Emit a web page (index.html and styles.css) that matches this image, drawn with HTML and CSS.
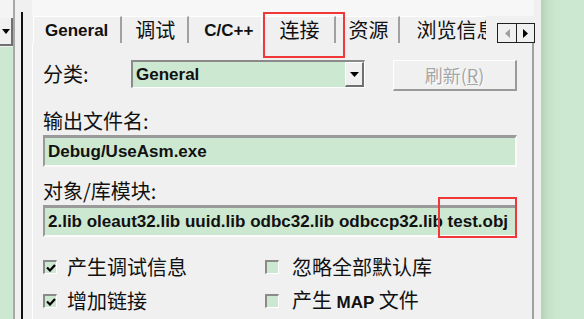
FILE: index.html
```html
<!DOCTYPE html>
<html>
<head>
<meta charset="utf-8">
<link rel="stylesheet" href="styles.css">
</head>
<body>
<div class="screen">
  <div class="left">
    <div class="left-top"></div>
    <div class="dd"><svg width="8" height="5" viewBox="0 0 8 5"><path d="M0 0H8L4 5Z" fill="#000"/></svg></div>
    <div class="left-field"></div>
  </div>
  <div class="gutter"></div>
  <div class="rule"></div>
  <div class="dialog">
    <div class="tabbar">
      <div class="tabs">
        <div class="tab t-general lat">General</div>
        <div class="tab t-debug">调试</div>
        <div class="tab t-cpp lat">C/C++</div>
        <div class="tab t-link">连接</div>
        <div class="tab t-res">资源</div>
        <div class="tab t-browse">浏览信息</div>
      </div>
      <div class="spin">
        <div class="spin-btn"><svg width="5" height="9" viewBox="0 0 5 9"><path d="M5 0V9L0 4.5Z" fill="#a0a0a0"/></svg></div>
        <div class="spin-btn"><svg width="5" height="9" viewBox="0 0 5 9"><path d="M0 0V9L5 4.5Z" fill="#000"/></svg></div>
      </div>
    </div>
    <div class="pane">
      <div class="row1">
        <span class="label cat">分类:</span>
        <div class="combo">
          <span class="val">General</span>
          <div class="combo-btn"><svg width="9" height="5" viewBox="0 0 9 5"><path d="M0 0H9L4.5 5Z" fill="#000"/></svg></div>
        </div>
        <div class="btn">刷新(<u>R</u>)</div>
      </div>
      <div class="label lbl-out">输出文件名:</div>
      <div class="field"><span class="val">Debug/UseAsm.exe</span></div>
      <div class="label lbl-obj">对象/库模块:</div>
      <div class="field"><span class="val">2.lib oleaut32.lib uuid.lib odbc32.lib odbccp32.lib test.obj</span></div>
      <div class="checks c1">
        <div class="check"><span class="box on"><svg width="10" height="8" viewBox="0 0 10 8"><path d="M1 3.5L4 6.5L9 1" stroke="#000" stroke-width="2.2" fill="none"/></svg></span><span class="label">产生调试信息</span></div>
        <div class="check"><span class="box"></span><span class="label">忽略全部默认库</span></div>
      </div>
      <div class="checks c2">
        <div class="check"><span class="box on"><svg width="10" height="8" viewBox="0 0 10 8"><path d="M1 3.5L4 6.5L9 1" stroke="#000" stroke-width="2.2" fill="none"/></svg></span><span class="label">增加链接</span></div>
        <div class="check"><span class="box"></span><span class="label">产生 <b class="lat">MAP</b> 文件</span></div>
      </div>
    </div>
  </div>
  <div class="desk"></div>
  <div class="mark mark-tab"></div>
  <div class="mark mark-obj"></div>
</div>
</body>
</html>
```
FILE: styles.css
```css
* { box-sizing: border-box; }
html, body { margin: 0; padding: 0; }
body { width: 584px; height: 319px; overflow: hidden; background: #f0f0f0; }
.screen {
  position: relative;
  display: flex;
  width: 584px; height: 319px;
  font-family: "Noto Sans CJK SC", "Liberation Sans", sans-serif;
  font-size: 20px; color: #111;
}
.lat { font-family: "Liberation Sans", sans-serif; font-weight: bold; font-size: 17px; }

.left { width: 13px; display: flex; flex-direction: column; flex-shrink: 0; }
.left-top { height: 18px; background: #f4f4f4; }
.dd {
  height: 28px; background: #f0f0f0;
  border-right: 2px solid #707070; border-bottom: 2px solid #707070;
  display: flex; align-items: center; padding-left: 2px;
}
.left-field { flex: 1; background: #cde8d0; margin-top: 1px; }
.gutter { width: 8px; flex-shrink: 0; border-left: 2px solid #a8a8a8; background: #f0f0f0; }
.rule { width: 2px; flex-shrink: 0; margin-top: 12px; background: #101010; }

.dialog { width: 518px; flex-shrink: 0; padding-left: 9px; padding-right: 7px; display: flex; flex-direction: column; background: #f0f0f0; }
.tabbar { height: 43px; display: flex; align-items: flex-end; position: relative; background: linear-gradient(#f7f7f7 0 16px, #f0f0f0 16px); }
.tabs { display: flex; height: 27px; width: 453px; flex-shrink: 0; overflow: hidden; margin-left: 1px; }
.tab {
  flex-shrink: 0;
  display: flex; align-items: center;
  height: 27px;
  border-top: 1px solid #fff; border-right: 2px solid #a0a0a0;
  white-space: nowrap; line-height: 1;
}
.t-general { border-left: 1px solid #fff; padding: 0 12px 0 11px; }
.t-debug { padding: 0 12px 0 13px; }
.t-cpp { padding: 0 7px 0 15px; border-right-color: transparent; }
.t-link { padding: 0 15px 0 17px; border-left: 1px solid #fff; margin-left: -1px; }
.t-res { padding: 0 10px 0 12px; }
.t-browse { border-right: none; padding-left: 16px; }
.spin {
  display: flex; margin-left: 11px; align-self: flex-start; margin-top: 23px;
  border: 1px solid #202020; height: 20px;
}
.spin-btn { width: 18px; display: flex; align-items: center; justify-content: center; background: #f0f0f0; }
.spin-btn + .spin-btn { border-left: 1px solid #202020; }

.pane {
  flex: 1; border-left: 1px solid #fff; border-right: 2px solid #a0a0a0;
  padding-left: 10px; display: flex; flex-direction: column;
}
.label { line-height: 26px; white-space: nowrap; }
.row1 { display: flex; align-items: flex-start; margin-top: 17px; height: 31px; }
.cat { width: 88px; margin-top: 1px; }
.combo {
  width: 234px; height: 28px; background: #cde8d0;
  border-top: 2px solid #8a8a8a; border-left: 2px solid #8a8a8a;
  border-right: 1px solid #fff; border-bottom: 1px solid #fff;
  display: flex; align-items: center; justify-content: space-between;
}
.val { font-family: "Liberation Sans", sans-serif; font-weight: bold; font-size: 17px; padding-left: 3px; white-space: nowrap; color: #111; }
.combo-btn {
  width: 19px; height: 100%; background: #f0f0f0;
  border-top: 1px solid #fff; border-left: 1px solid #fff;
  border-right: 2px solid #707070; border-bottom: 2px solid #707070;
  display: flex; align-items: center; justify-content: center;
}
.btn {
  margin-left: 28px; width: 124px; height: 31px;
  border-top: 1px solid #fff; border-left: 1px solid #fff;
  border-right: 2px solid #9a9a9a; border-bottom: 2px solid #9a9a9a;
  display: flex; align-items: center; justify-content: center;
  color: #a6a6a6; text-shadow: 1px 1px 0 #fff; font-size: 18px;
}
.btn u { text-decoration: none; border-bottom: 1px solid #a6a6a6; line-height: 1; }
.lbl-out { margin-top: 17px; }
.lbl-obj { margin-top: 11px; }
.field {
  width: 474px; height: 32px; margin-top: 1px; background: #cde8d0;
  border-top: 3px solid #9a9a9a; border-left: 2px solid #9a9a9a;
  border-right: 2px solid #fafafa; border-bottom: 2px solid #fafafa;
  display: flex; align-items: center; overflow: hidden;
}
.checks { display: flex; height: 26px; align-items: center; }
.c1 { margin-top: 17px; }
.c2 { margin-top: 8px; }
.check { display: flex; align-items: center; width: 222px; }
.box {
  width: 14px; height: 14px; margin-right: 10px; background: #cde8d0;
  border-top: 2px solid #8a8a8a; border-left: 2px solid #8a8a8a;
  border-right: 1px solid #fff; border-bottom: 1px solid #fff;
  display: flex; align-items: center; justify-content: center;
}
.check + .check .box { margin-right: 13px; }
.desk { width: 43px; flex-shrink: 0; background: linear-gradient(90deg, #b6d2b9 0, #c6e2c9 8px, #cde8d0 16px); }
.mark { position: absolute; border: 2px solid #f03838; }
.mark-tab { left: 263px; top: 12px; width: 82px; height: 46px; }
.mark-obj { left: 438px; top: 197px; width: 79px; height: 41px; }
```
